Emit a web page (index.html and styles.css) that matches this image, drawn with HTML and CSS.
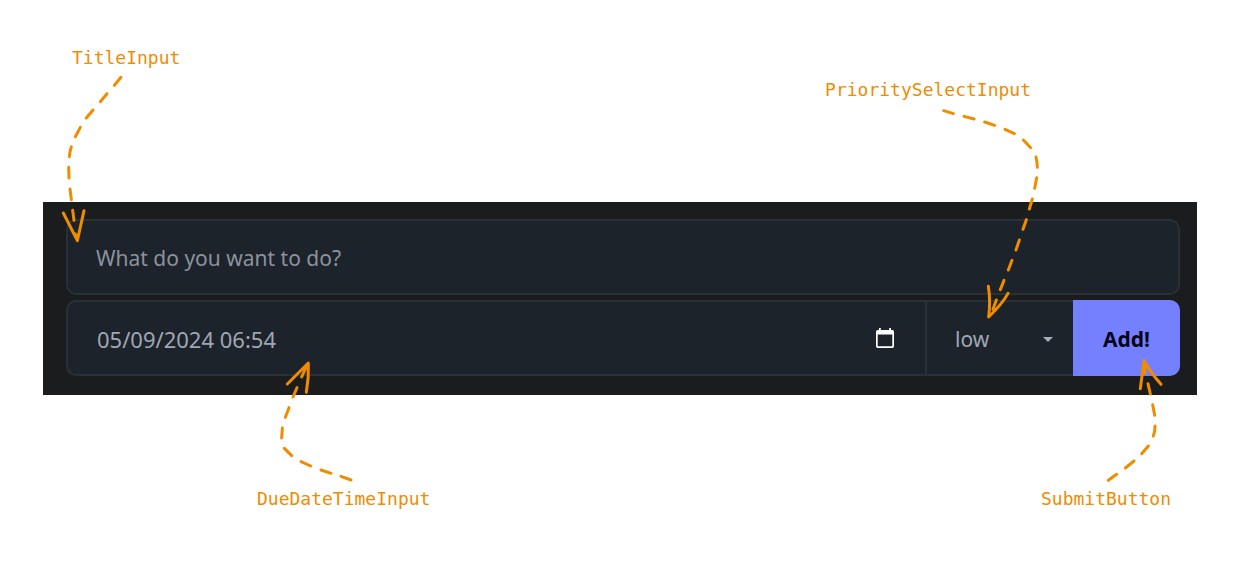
FILE: index.html
```html
<!DOCTYPE html>
<html lang="en">
<head>
<meta charset="utf-8">
<meta name="viewport" content="width=device-width, initial-scale=1">
<title>Todo form components</title>
<link rel="stylesheet" href="styles.css">
</head>
<body>
<main class="diagram">
  <div class="labels labels-top">
    <span class="label">TitleInput</span>
    <span class="label label-lower">PrioritySelectInput</span>
  </div>

  <form class="panel">
    <input class="field title-input" type="text" aria-label="Title" placeholder="What do you want to do?">
    <div class="row">
      <div class="field date-field">
        <input class="date-input" type="text" aria-label="Due date and time" value="05/09/2024 06:54">
        <button class="calendar-button" type="button" aria-label="Open calendar">
          <svg class="calendar-icon" viewBox="0 0 18 20" aria-hidden="true">
            <path fill="#fff" fill-rule="evenodd" d="M3 0h1.800v2h8.400V0H15v2h1.300a1.700 1.700 0 0 1 1.700 1.700v14.600a1.700 1.700 0 0 1-1.700 1.700H1.700A1.700 1.700 0 0 1 0 18.300V3.700A1.700 1.700 0 0 1 1.700 2H3zM1.700 6.500v11.800h14.600V6.500z"/>
          </svg>
        </button>
      </div>
      <div class="select-field">
        <select class="priority-select" aria-label="Priority">
          <option>low</option>
          <option>medium</option>
          <option>high</option>
        </select>
        <svg class="caret" viewBox="0 0 10 6" aria-hidden="true"><path fill="#a6adbb" d="M0 1h10L5 6z"/></svg>
      </div>
      <button class="submit-button" type="submit">Add!</button>
    </div>
  </form>

  <div class="labels labels-bottom">
    <span class="label">DueDateTimeInput</span>
    <span class="label">SubmitButton</span>
  </div>

  <svg class="arrow arrow-title" viewBox="0 0 960 660" aria-hidden="true">
    <path d="M243 112L223 136M201 161L181 185M159 210L139 234M121 262L106 290M94 320Q89 335 88 350M86 382L87 414M90 447L94 479M98 511L102 541M70 519L112 602M132 512L112 602L106 582"/>
  </svg>
  <svg class="arrow arrow-date" viewBox="0 0 660 540" aria-hidden="true">
    <path d="M333 420L303 409M273 400L243 390M212 378L183 365M155 347L133 325M125 294L127 264M136 232L147 203M159 171L171 143M185 111L198 82M142 132L205 69Q207 112 199 157"/>
  </svg>
  <svg class="arrow arrow-priority" viewBox="0 0 780 780" aria-hidden="true">
    <path d="M401 122L430 131M462 139L492 147M524 156L554 166M585 178L613 191M640 210L662 233M678 261Q682 277 682 292M680 323L674 355M667 387L658 417M649 449L639 478M628 510L618 540M606 571L595 600M582 631L571 659M559 690L549 718M535 649Q542 690 536 741Q578 700 594 670"/>
  </svg>
  <svg class="arrow arrow-submit" viewBox="0 0 540 690" aria-hidden="true">
    <path d="M235 571L260 553M286 534L312 513M335 491L355 468M370 438Q376 422 375 408M374 376L368 344M361 312L354 281M346 249L342 212M331 296L342 212Q360 245 393 283"/>
  </svg>
</main>
</body>
</html>
```
FILE: styles.css
```css
* {
  box-sizing: border-box;
}

body {
  margin: 0;
  background: #fff;
  font-family: "Noto Sans", sans-serif;
}

.diagram {
  position: relative;
}

.labels {
  display: flex;
  justify-content: space-between;
  align-items: flex-start;
}

.labels-top {
  padding: 46px 208px 100px 72px;
}

.labels-bottom {
  padding: 92px 68px 51px 257px;
}

.label {
  color: #f08c00;
  font: 18px/24px "DejaVu Sans Mono", monospace;
}

.label-lower {
  margin-top: 32px;
}

.panel {
  display: flex;
  flex-direction: column;
  gap: 5px;
  margin: 0 42px 0 43px;
  padding: 17px 17px 19px 23px;
  background: #1b1c1d;
}

.field,
.select-field,
.submit-button {
  height: 76px;
}

.field {
  border: 2px solid #2a3037;
  border-radius: 10px;
  background: #1d232a;
}

.title-input,
.date-input,
.priority-select {
  font: 21px/28px "Noto Sans", sans-serif;
  color: #a0a7b4;
  outline: none;
}

.title-input {
  width: 100%;
  padding: 2px 28px 0;
}

.title-input::placeholder {
  color: #8b929e;
  opacity: 1;
}

.row {
  display: flex;
}

.date-field {
  display: flex;
  flex: 1;
  align-items: center;
  min-width: 0;
  padding: 0 31px 0 29px;
  border-radius: 10px 0 0 10px;
}

.date-input {
  flex: 1;
  min-width: 0;
  padding: 2px 0 0;
  border: 0;
  background: transparent;
  font-size: 22px;
}

.calendar-button {
  display: flex;
  padding: 0;
  border: 0;
  background: transparent;
}

.calendar-icon {
  width: 18px;
  height: 20px;
}

.select-field {
  position: relative;
  width: 146px;
}

.priority-select {
  width: 100%;
  height: 100%;
  padding: 2px 28px 0;
  border: 2px solid #2a3037;
  border-width: 2px 0;
  border-radius: 0;
  background: #1d232a;
  appearance: none;
}

.caret {
  position: absolute;
  top: 36px;
  right: 20px;
  width: 10px;
  height: 6px;
  pointer-events: none;
}

.submit-button {
  width: 107px;
  padding: 2px 0 0;
  border: 0;
  border-radius: 0 10px 10px 0;
  background: #7480ff;
  color: #050617;
  font: 700 21px/28px "Noto Sans", sans-serif;
}

.arrow {
  position: absolute;
  fill: none;
  stroke: #f08c00;
  stroke-width: 9;
  stroke-linecap: round;
  stroke-linejoin: round;
  pointer-events: none;
}

.arrow-title {
  top: 40px;
  left: 40px;
  width: 320px;
}

.arrow-date {
  top: 340px;
  left: 240px;
  width: 220px;
}

.arrow-priority {
  top: 70px;
  right: 169px;
  width: 260px;
}

.arrow-submit {
  top: 290px;
  right: 29px;
  width: 180px;
}
```
